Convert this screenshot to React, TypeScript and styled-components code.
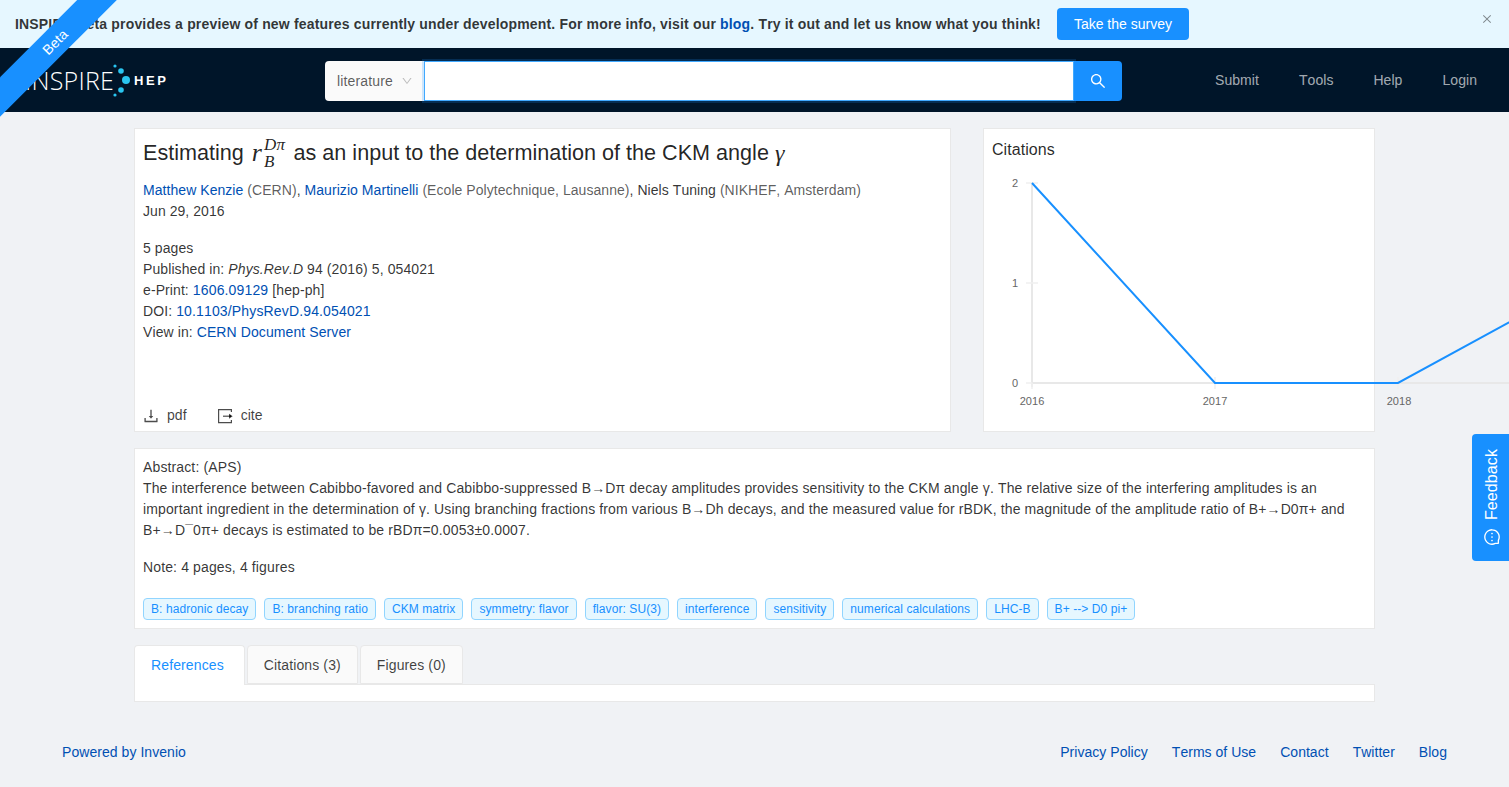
import React from "react";
import styled, { createGlobalStyle } from "styled-components";
import { AiOutlineDownload, AiOutlineSearch, AiOutlineDown, AiOutlineClose, AiOutlineMessage } from "react-icons/ai";

const Global = createGlobalStyle`
  html, body { margin: 0; padding: 0; height: 787px; overflow: hidden; background: #f0f2f5; }
  body { font-family: "Liberation Sans", Arial, sans-serif; font-size: 14px; line-height: 21px; color: rgba(0,0,0,.8); font-kerning: none; letter-spacing: .055px; }
  * { box-sizing: border-box; }
`;

const Page = styled.div`
  position: relative; width: 1509px; height: 787px; overflow: hidden; display: flex; flex-direction: column;
`;
const Ribbon = styled.div`
  position: absolute; z-index: 5; top: 28px; left: -40px; width: 190px; height: 28px; line-height: 28px;
  transform: rotate(-45deg); background: #1890ff; color: #fff; text-align: center; font-size: 14px;
`;
const Banner = styled.div`
  position: relative; height: 48px; flex: none; background: #e6f7ff; display: flex; align-items: center; padding-left: 15px; gap: 16px;
`;
const BannerText = styled.span`
  font-weight: 700; color: rgba(0,0,0,.8); white-space: nowrap; letter-spacing: .17px;
`;
const Link = styled.a`
  color: #0050b3; text-decoration: none;
`;
const NumLink = styled(Link)`
  letter-spacing: .15px;
`;
const SurveyButton = styled.button`
  height: 32px; width: 132px; border: 0; border-radius: 4px; background: #1890ff; color: #fff;
  font: 14px "Liberation Sans", Arial, sans-serif; padding: 0;
`;
const CloseIcon = styled.span`
  position: absolute; right: 16px; top: 13px; display: flex; color: rgba(0,0,0,.45); font-size: 12px;
`;
const Header = styled.header`
  height: 64px; flex: none; background: #001529; display: flex; align-items: center; padding-right: 32px;
`;
const LogoArea = styled.div`
  width: 325px; flex: none; display: flex; align-items: center; padding-left: 25px; color: #fff;
`;
const LogoWord = styled.span`
  font-family: "Open Sans", sans-serif; font-weight: 300; font-size: 25px; line-height: 30px; letter-spacing: .2px; width: 88px; white-space: nowrap;
`;
const LogoHep = styled.span`
  font-weight: 700; font-size: 13px; letter-spacing: 2.6px;
`;
const LogoDotsSvg = styled.svg`
  flex: none;
`;
const SearchBox = styled.div`
  width: 797px; height: 40px; flex: none; display: flex; margin-top: 2px;
`;
const ScopeSelect = styled.div`
  width: 99px; background: #fafafa; border-radius: 4px 0 0 4px; display: flex; align-items: center; justify-content: space-between;
  padding: 0 11px 0 12px; font-size: 14px; letter-spacing: .15px; color: rgba(0,0,0,.65);
`;
const CaretIcon = styled.span`
  display: flex; color: rgba(0,0,0,.25); font-size: 12px;
`;
const SearchInput = styled.div`
  flex: 1; background: #fff; border: 1px solid #40a9ff; box-shadow: 0 0 0 2px rgba(24,144,255,.2);
`;
const SearchButton = styled.div`
  width: 48px; background: #1890ff; border-radius: 0 4px 4px 0; display: flex; align-items: center; justify-content: center; color: #fff; font-size: 18px; position: relative;
`;
const Nav = styled.nav`
  margin-left: auto; display: flex; gap: 40px; color: rgba(255,255,255,.65);
`;
const Content = styled.main`
  width: 1241px; margin: 16px 0 0 134px; display: flex; flex-direction: column; gap: 16px;
`;
const TopRow = styled.div`
  display: flex; justify-content: space-between; height: 304px;
`;
const Card = styled.section`
  background: #fff; border: 1px solid #e8e8e8; padding: 8px;
`;
const DetailCard = styled(Card)`
  width: 817px; display: flex; flex-direction: column;
`;
const Title = styled.h2`
  margin: 0; font-weight: 400; font-size: 21.6px; line-height: 32px; height: 34px; padding-bottom: 2px; letter-spacing: 0; color: rgba(0,0,0,.87); display: flex; align-items: center; white-space: pre;
`;
const MathBlock = styled.span`
  display: inline-flex; align-items: center; font-family: "Liberation Serif", serif; font-style: italic; margin: 0 8px 0 8px; font-size: 26px;
`;
const MathGamma = styled.span`
  font-family: "Liberation Serif", serif; font-style: italic; font-size: 24px;
`;
const MathStack = styled.span`
  display: inline-flex; flex-direction: column; font-size: 17px; line-height: 17px; letter-spacing: .4px; margin-left: 2px;
`;
const Authors = styled.div`
  margin-top: 9px;
`;
const Aff = styled.span`
  color: rgba(0,0,0,.65);
`;
const MetaBlock = styled.div`
  margin-top: 16px; letter-spacing: .09px;
`;
const Actions = styled.div`
  margin-top: auto; display: flex; gap: 30px; margin-bottom: -3px;
`;
const Action = styled.span`
  display: flex; align-items: center; gap: 7px; color: rgba(0,0,0,.75);
`;
const DownloadIconBox = styled.span`
  display: flex; font-size: 18px; margin-left: -1px; color: rgba(0,0,0,.7);
`;
const CiteIconBox = styled.span`
  display: flex; margin-right: 1px; color: rgba(0,0,0,.7);
`;
const ChartCard = styled(Card)`
  width: 392px; position: relative;
`;
const ChartTitle = styled.div`
  font-size: 16px; line-height: 24px; color: rgba(0,0,0,.85); padding-top: 1px;
`;
const ChartSvg = styled.svg`
  display: block; position: absolute; left: -1px; top: -1px; overflow: visible;
`;
const AbstractCard = styled(Card)`
  height: 181px; padding-top: 8px; letter-spacing: .13px;
`;
const Note = styled.div`
  margin-top: 16px;
`;
const TagRow = styled.div`
  display: flex; gap: 8px; margin-top: 20px;
`;
const Tag = styled.span`
  height: 22px; line-height: 20px; padding: 0 7px; font-size: 12px; letter-spacing: .08px; color: #1890ff; background: #e6f7ff; border: 1px solid #91d5ff; border-radius: 4px; white-space: nowrap;
`;
const TabsBlock = styled.div`
  display: flex; flex-direction: column;
`;
const TabBar = styled.div`
  display: flex; gap: 2px; height: 40px; border-bottom: 1px solid #e8e8e8;
`;
const Tab = styled.div<{ $active?: boolean }>`
  height: ${p => (p.$active ? "40px" : "39px")}; padding: 0 ${p => (p.$active ? "20px" : "16px")} 0 16px; line-height: 38px; letter-spacing: .12px; border: 1px solid #e8e8e8;
  border-bottom: ${p => (p.$active ? "0" : "1px solid #e8e8e8")}; border-radius: 4px 4px 0 0;
  background: ${p => (p.$active ? "#fff" : "#fafafa")}; color: ${p => (p.$active ? "#1890ff" : "rgba(0,0,0,.75)")};
`;
const TabPanel = styled.div`
  height: 17px; background: #fff; border: 1px solid #e8e8e8; border-top: 0;
`;
const Footer = styled.footer`
  margin-top: 40px; padding: 0 62px; display: flex; justify-content: space-between;
`;
const FooterLinks = styled.div`
  display: flex; gap: 24px; letter-spacing: .03px;
`;
const Feedback = styled.div`
  position: absolute; right: 0; top: 434px; width: 37px; height: 127px; background: #1890ff; color: #fff; border-radius: 4px 0 0 4px;
  display: flex; flex-direction: column; align-items: center; padding: 15px 0 0 3px; gap: 8px; font-size: 16px;
`;
const FeedbackText = styled.span`
  writing-mode: vertical-rl; transform: rotate(180deg); line-height: 20px; letter-spacing: .1px;
`;
const FeedbackIcon = styled.span`
  display: flex; transform: rotate(-90deg); font-size: 18px;
`;

const tags = ["B: hadronic decay", "B: branching ratio", "CKM matrix", "symmetry: flavor", "flavor: SU(3)", "interference", "sensitivity", "numerical calculations", "LHC-B", "B+ --> D0 pi+"];

const LogoDots = () => (
  <LogoDotsSvg width="21" height="34" viewBox="0 0 21 34">
    <circle cx="2" cy="3" r="1.6" fill="#29c5f0" />
    <circle cx="8" cy="8" r="2.8" fill="#29c5f0" />
    <circle cx="13" cy="17" r="4" fill="#29c5f0" />
    <circle cx="8" cy="27" r="2.8" fill="#29c5f0" />
    <circle cx="2" cy="32" r="1.6" fill="#29c5f0" />
  </LogoDotsSvg>
);

const CiteIcon = () => (
  <svg width="16" height="16" viewBox="0 0 16 16" fill="none" stroke="currentColor" strokeWidth="1.2">
    <path d="M14.4 4V1.6H1.6v13h12.8v-2.6" />
    <path d="M6 8.2h8" />
    <path d="M12.6 6.8 14.6 8.2 12.6 9.6z" fill="currentColor" />
  </svg>
);

const Chart = () => (
  <ChartSvg width="526" height="303" viewBox="0 0 526 303">
    <g stroke="#e8e8e8" strokeWidth="2" fill="none">
      <path d="M49 55V259" />
      <path d="M49 255H526" />
    </g>
    <g stroke="#f0f0f0" strokeWidth="1.5" fill="none">
      <path d="M43 55H55M43 155H55M43 255H49M49 255V261M232 249V261M415 249V261" />
    </g>
    <polyline points="49,55 232,255 415,255 598,155" fill="none" stroke="#1890ff" strokeWidth="2" />
    <g fill="#666" fontSize="11" fontFamily="Liberation Sans, Arial, sans-serif">
      <text x="32" y="59" textAnchor="middle">2</text>
      <text x="32" y="159" textAnchor="middle">1</text>
      <text x="32" y="259" textAnchor="middle">0</text>
      <text x="49" y="277" textAnchor="middle">2016</text>
      <text x="232" y="277" textAnchor="middle">2017</text>
      <text x="416" y="277" textAnchor="middle">2018</text>
    </g>
  </ChartSvg>
);

export default function App() {
  return (
    <Page>
      <Global />
      <Ribbon>Beta</Ribbon>
      <Banner>
        <BannerText>
          INSPIRE Beta provides a preview of new features currently under development. For more info, visit our <Link>blog</Link>. Try it out and let us know what you think!
        </BannerText>
        <SurveyButton>Take the survey</SurveyButton>
        <CloseIcon><AiOutlineClose /></CloseIcon>
      </Banner>
      <Header>
        <LogoArea>
          <LogoWord>INSPIRE</LogoWord>
          <LogoDots />
          <LogoHep>HEP</LogoHep>
        </LogoArea>
        <SearchBox>
          <ScopeSelect>literature<CaretIcon><AiOutlineDown /></CaretIcon></ScopeSelect>
          <SearchInput />
          <SearchButton><AiOutlineSearch /></SearchButton>
        </SearchBox>
        <Nav>
          <span>Submit</span><span>Tools</span><span>Help</span><span>Login</span>
        </Nav>
      </Header>
      <Content>
        <TopRow>
          <DetailCard>
            <Title>
              Estimating
              <MathBlock>r<MathStack><span>Dπ</span><span>B</span></MathStack></MathBlock>
              as an input to the determination of the CKM angle <MathGamma>γ</MathGamma>
            </Title>
            <Authors>
              <Link>Matthew Kenzie</Link> <Aff>(CERN)</Aff>, <Link>Maurizio Martinelli</Link> <Aff>(Ecole Polytechnique, Lausanne)</Aff>, Niels Tuning <Aff>(NIKHEF, Amsterdam)</Aff>
              <br />Jun 29, 2016
            </Authors>
            <MetaBlock>
              5 pages<br />
              Published in: <i>Phys.Rev.D</i> 94 (2016) 5, 054021<br />
              e-Print: <NumLink>1606.09129</NumLink> [hep-ph]<br />
              DOI: <NumLink>10.1103/PhysRevD.94.054021</NumLink><br />
              View in: <Link>CERN Document Server</Link>
            </MetaBlock>
            <Actions>
              <Action><DownloadIconBox><AiOutlineDownload /></DownloadIconBox>pdf</Action>
              <Action><CiteIconBox><CiteIcon /></CiteIconBox>cite</Action>
            </Actions>
          </DetailCard>
          <ChartCard>
            <ChartTitle>Citations</ChartTitle>
            <Chart />
          </ChartCard>
        </TopRow>
        <AbstractCard>
          Abstract: (APS)<br />
          The interference between Cabibbo-favored and Cabibbo-suppressed B→Dπ decay amplitudes provides sensitivity to the CKM angle γ. The relative size of the interfering amplitudes is an important ingredient in the determination of γ. Using branching fractions from various B→Dh decays, and the measured value for rBDK, the magnitude of the amplitude ratio of B+→D0π+ and B+→D¯0π+ decays is estimated to be rBDπ=0.0053±0.0007.
          <Note>Note: 4 pages, 4 figures</Note>
          <TagRow>{tags.map(t => <Tag key={t}>{t}</Tag>)}</TagRow>
        </AbstractCard>
        <TabsBlock>
          <TabBar>
            <Tab $active>References</Tab>
            <Tab>Citations (3)</Tab>
            <Tab>Figures (0)</Tab>
          </TabBar>
          <TabPanel />
        </TabsBlock>
      </Content>
      <Footer>
        <Link>Powered by Invenio</Link>
        <FooterLinks>
          <Link>Privacy Policy</Link><Link>Terms of Use</Link><Link>Contact</Link><Link>Twitter</Link><Link>Blog</Link>
        </FooterLinks>
      </Footer>
      <Feedback>
        <FeedbackText>Feedback</FeedbackText>
        <FeedbackIcon><AiOutlineMessage /></FeedbackIcon>
      </Feedback>
    </Page>
  );
}
